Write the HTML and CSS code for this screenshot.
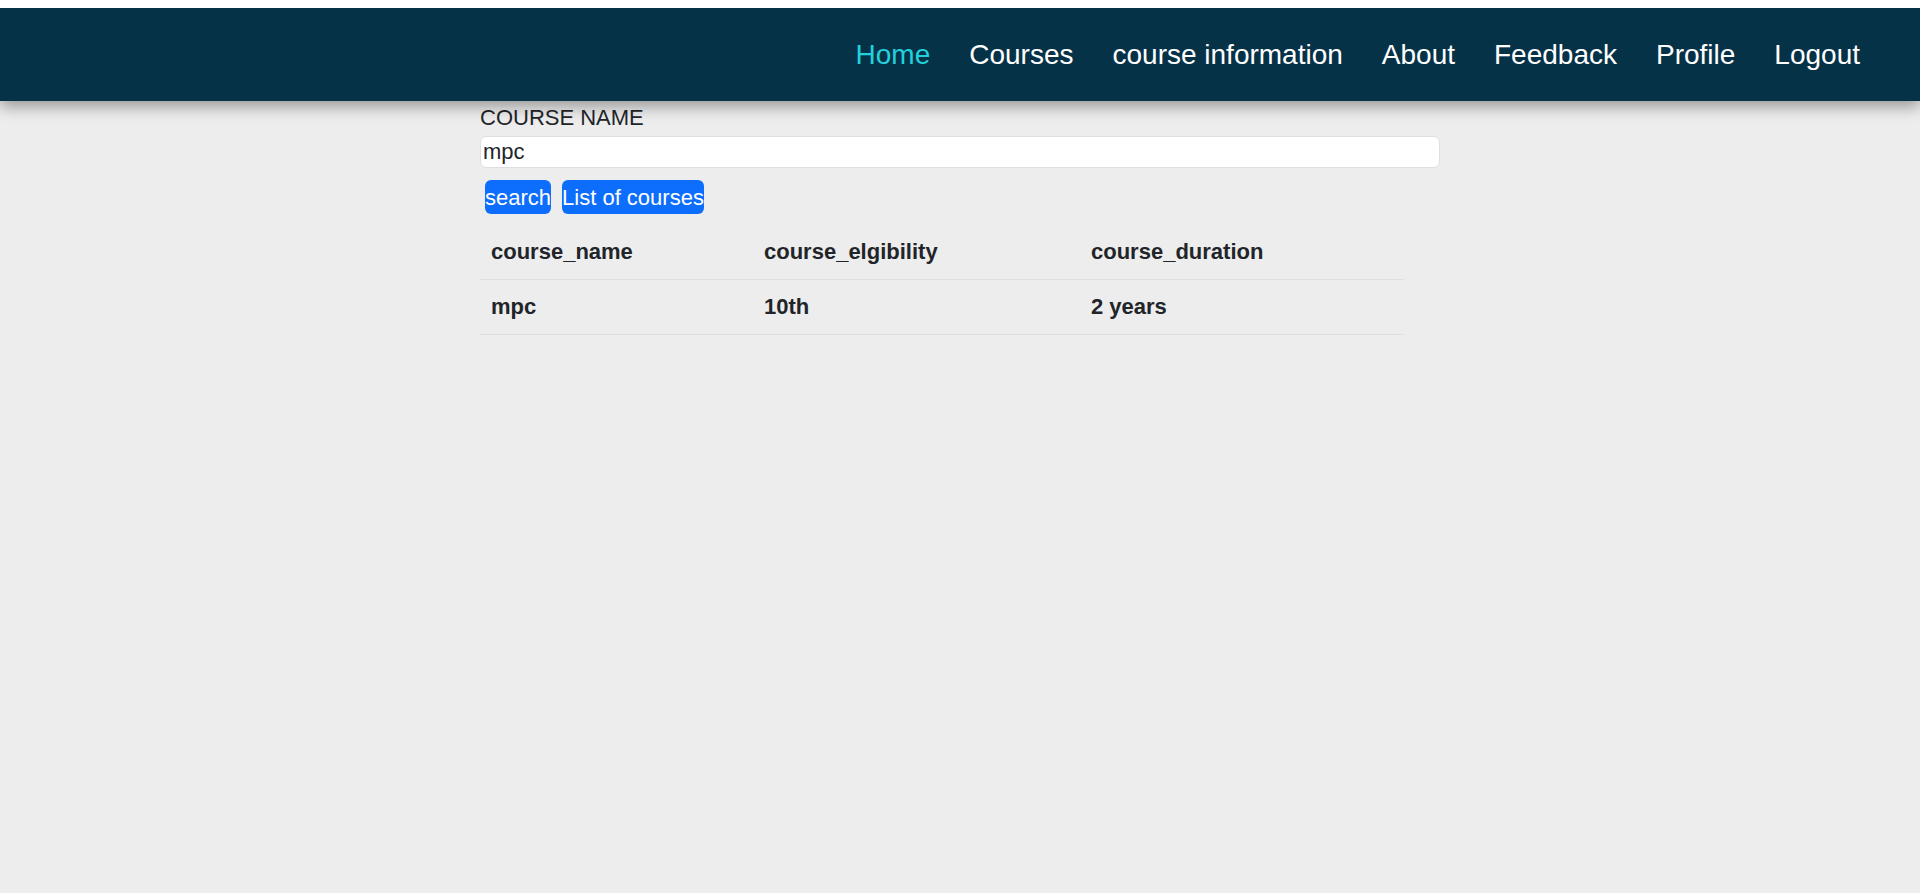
FILE: index.html
```html
<!DOCTYPE html>
<html lang="en">
<head>
<meta charset="utf-8">
<title>Course information</title>
<link rel="stylesheet" href="styles.css">
</head>
<body>
<nav class="navbar">
  <ul class="nav-links">
    <li><a class="nav-link active" href="#">Home</a></li>
    <li><a class="nav-link" href="#">Courses</a></li>
    <li><a class="nav-link" href="#">course information</a></li>
    <li><a class="nav-link" href="#">About</a></li>
    <li><a class="nav-link" href="#">Feedback</a></li>
    <li><a class="nav-link" href="#">Profile</a></li>
    <li><a class="nav-link" href="#">Logout</a></li>
  </ul>
</nav>
<main class="container">
  <form class="search-form">
    <label class="field-label" for="course">COURSE NAME</label>
    <input class="field-input" id="course" type="text" value="mpc">
    <div class="actions">
      <button class="btn" type="button">search</button>
      <button class="btn" type="button">List of courses</button>
    </div>
  </form>
  <table class="course-table">
    <thead>
      <tr>
        <th class="col-name">course_name</th>
        <th class="col-elig">course_elgibility</th>
        <th class="col-dur">course_duration</th>
      </tr>
    </thead>
    <tbody>
      <tr>
        <td>mpc</td>
        <td>10th</td>
        <td>2 years</td>
      </tr>
    </tbody>
  </table>
</main>
</body>
</html>
```
FILE: styles.css
```css
html {
  background: #ffffff;
}
body {
  margin: 8px 0 0 0;
  min-height: calc(100vh - 8px);
  background: #ededed;
  font-family: "Liberation Sans", Arial, sans-serif;
  color: #212529;
}
.navbar {
  height: 93px;
  background: #063248;
  display: flex;
  align-items: center;
  justify-content: flex-end;
  box-shadow: 0 6px 14px rgba(0, 0, 0, 0.35);
  position: relative;
  z-index: 1;
}
.nav-links {
  list-style: none;
  margin: 0;
  padding: 0 60px 0 0;
  display: flex;
  gap: 39px;
}
.nav-link {
  color: #ffffff;
  text-decoration: none;
  font-size: 28px;
}
.nav-link.active {
  color: #22d1dc;
}
.container {
  width: 960px;
  margin: 0 auto;
  padding-top: 4px;
}
.search-form {
  display: flex;
  flex-direction: column;
  align-items: flex-start;
}
.field-label {
  font-size: 22px;
  line-height: 25px;
  color: #212529;
}
.field-input {
  box-sizing: border-box;
  margin-top: 6px;
  width: 960px;
  height: 32px;
  padding: 0 2px;
  border: 1px solid #dcdfe3;
  border-radius: 6px;
  background: #ffffff;
  font-family: "Liberation Sans", Arial, sans-serif;
  font-size: 22px;
  color: #212529;
  outline: none;
}
.actions {
  display: flex;
  gap: 11px;
  margin-top: 12px;
  padding-left: 5px;
}
.btn {
  height: 34px;
  padding: 0;
  border: none;
  border-radius: 6px;
  background: #0d6efd;
  color: #ffffff;
  font-family: "Liberation Sans", Arial, sans-serif;
  font-size: 22px;
  line-height: 25px;
}
.course-table {
  margin-top: 11px;
  width: 924px;
  border-collapse: collapse;
  table-layout: fixed;
  font-size: 22px;
  line-height: 32px;
  font-weight: bold;
}
.course-table th,
.course-table td {
  box-sizing: border-box;
  text-align: left;
  padding: 11px;
  border-bottom: 1px solid #dcdfe3;
}
.col-name { width: 273px; }
.col-elig { width: 327px; }
.col-dur { width: 324px; }
```
